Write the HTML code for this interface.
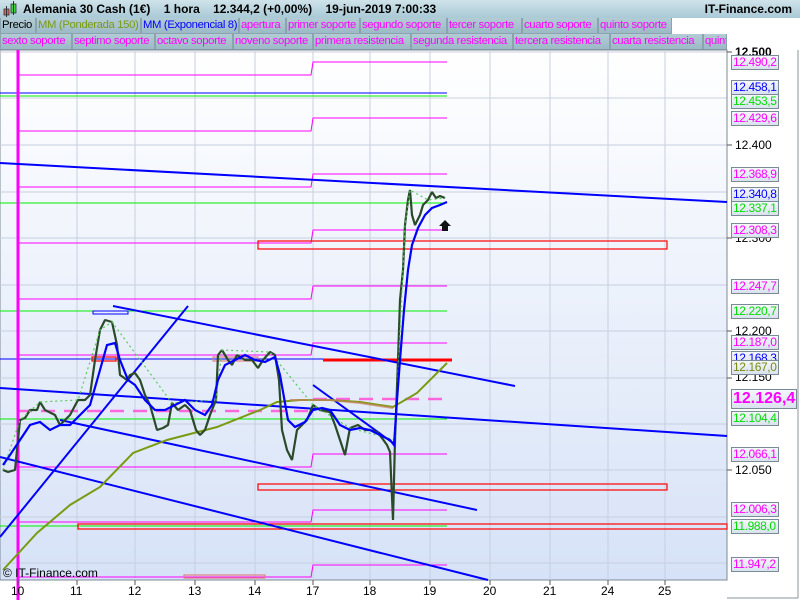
<!DOCTYPE html>
<html><head><meta charset="utf-8"><style>
*{margin:0;padding:0;box-sizing:border-box}
body{width:800px;height:600px;overflow:hidden;background:#fff;font-family:"Liberation Sans",sans-serif;position:relative}
#title{position:absolute;left:0;top:0;width:800px;height:18px;background:linear-gradient(#cfe3ea,#a9c9d6);font-weight:bold;font-size:12px;line-height:18px;color:#000;white-space:pre}
.row{position:absolute;left:0;height:16px;font-size:11.3px;line-height:15px;white-space:nowrap;letter-spacing:-0.35px}
.row span{position:absolute;top:0;height:16px;background:linear-gradient(#b3ccd6,#9bbac7);border:1px solid #8aa3ae;border-top:none;padding-left:1px;color:#f0f;overflow:hidden}
#rowbg{position:absolute;left:0;top:18px;width:727px;height:32px;background:#fff}
.lab{position:absolute;left:731px;width:48px;height:15px;border:1px solid #7b8b96;background:linear-gradient(#f4f7fb,#d9e2ee);font-size:12px;line-height:13px;padding-left:1px;white-space:nowrap;letter-spacing:-0.4px;overflow:hidden}
.ax{position:absolute;left:735px;font-size:12px;line-height:12px;color:#000}
.dt{position:absolute;top:584px;font-size:12px;color:#000}
</style></head><body>
<div id="title"><svg width="16" height="18" style="position:absolute;left:2px;top:0"><rect x="2" y="9" width="5" height="6" fill="#e06060" stroke="#333" stroke-width=".8"/><line x1="4.5" y1="6" x2="4.5" y2="17" stroke="#333"/><rect x="9" y="4" width="5" height="9" fill="#40d040" stroke="#333" stroke-width=".8"/><line x1="11.5" y1="1" x2="11.5" y2="15" stroke="#333"/></svg><span style="position:absolute;left:23px">Alemania 30 Cash (1€)    1 hora    12.344,2 (+0,00%)    19-jun-2019 7:00:33</span><span style="position:absolute;right:8px">IT-Finance.com</span></div>
<div id="rowbg"></div>
<div class="row" style="top:18px;width:800px">
<span style="left:0;width:36px;color:#000">Precio</span>
<span style="left:36px;width:105px;color:#7a9a10">MM (Ponderada 150)</span>
<span style="left:141px;width:98px;color:#0000ff">MM (Exponencial 8)</span>
<span style="left:239px;width:47px">apertura</span>
<span style="left:286px;width:74px">primer soporte</span>
<span style="left:360px;width:87px">segundo soporte</span>
<span style="left:447px;width:75px">tercer soporte</span>
<span style="left:522px;width:76px">cuarto soporte</span>
<span style="left:598px;width:74px">quinto soporte</span>
</div>
<div class="row" style="top:34px;width:800px">
<span style="left:0;width:72px">sexto soporte</span>
<span style="left:72px;width:83px">septimo soporte</span>
<span style="left:155px;width:78px">octavo soporte</span>
<span style="left:233px;width:80px">noveno soporte</span>
<span style="left:313px;width:98px">primera resistencia</span>
<span style="left:411px;width:102px">segunda resistencia</span>
<span style="left:513px;width:97px">tercera resistencia</span>
<span style="left:610px;width:93px">cuarta resistencia</span>
<span style="left:703px;width:24px">quint</span>
</div>
<svg width="800" height="600" style="position:absolute;left:0;top:0;overflow:hidden" font-family="Liberation Sans">
<defs><linearGradient id="bg" x1="0" y1="0" x2="0" y2="1"><stop offset="0" stop-color="#ffffff"/><stop offset="1" stop-color="#d6e2f7"/></linearGradient></defs>
<rect x="0" y="50" width="727" height="530" fill="url(#bg)" stroke="#7b8b96"/>
<g stroke="#c8cfdf" stroke-width="1">
<path d="M77 50V580M135 50V580M195 50V580M255 50V580M313 50V580M370 50V580M430 50V580M490 50V580M550 50V580M608 50V580M665 50V580"/>
<path d="M0 52H727M0 98H727M0 145H727M0 192H727M0 238H727M0 285H727M0 331H727M0 378H727M0 424H727M0 470H727M0 517H727M0 563H727"/>
</g>
<line x1="727" y1="50" x2="727" y2="580" stroke="#7b8b96"/>
<g fill="none" stroke="#ff00ff" stroke-width="1">
<path d="M18 75H311L313 62H447"/><path d="M18 131H311L313 118H447"/><path d="M18 187H311L313 174H447"/><path d="M18 243H311L313 230H447"/><path d="M18 299H311L313 286H447"/><path d="M18 355H311L313 343H447"/><path d="M18 467H311L313 454H447"/><path d="M18 522H311L313 510H447"/><path d="M18 577H311L313 565H447"/>
</g>
<g stroke="#ff66dd" stroke-width="2.5" stroke-dasharray="14 9"><path d="M18 411H311"/><path d="M313 399H447"/></g>
<g stroke="#00ee00" stroke-width="1"><path d="M0 96H447M0 203H447M0 311H447M0 419H447M0 526H447"/></g>
<g stroke="#0000ff" stroke-width="1"><path d="M0 93H447M0 359H447"/></g>
<g fill="none" stroke="#ff0000" stroke-width="1.2"><rect x="258" y="241" width="409" height="8"/><rect x="258" y="484" width="409" height="6"/><rect x="78" y="524" width="649" height="5"/><rect x="92" y="357" width="24" height="4"/><rect x="213" y="357" width="45" height="4" stroke="#e08080"/><rect x="184" y="575" width="81" height="3" stroke="#e08080"/></g>
<rect x="93" y="311" width="35" height="3" fill="none" stroke="#0000ff"/>
<line x1="323" y1="360" x2="452" y2="360" stroke="#ff0000" stroke-width="3"/>
<line x1="18" y1="50" x2="18" y2="600" stroke="#ff00ff" stroke-width="3"/>
<g stroke="#0000ff" stroke-width="2" fill="none">
<path d="M0 163L727 202"/><path d="M113 306L515 386"/><path d="M0 388L727 436"/><path d="M60 420L477 510"/><path d="M0 457L488 580"/><path d="M0 537L188 306"/><path d="M313 385L393 443"/>
</g>
<path d="M3 570L37 533L70 505L100 487L133 453L167 440L217 427L260 410L277 402L300 400L330 400L360 402L393 407L417 393L447 363" fill="none" stroke="#7a9a10" stroke-width="2"/>
<path d="M290 400L330 400L360 403L393 408" fill="none" stroke="#c88060" stroke-width="2" opacity=".7"/>
<polyline fill="none" stroke="#2a4a2a" stroke-width="2.2" stroke-linejoin="bevel" points="3,470 8,472 15,470 20,420 25,418 30,410 37,410 40,402 45,410 55,415 60,425 70,415 78,400 85,400 90,395 95,360 100,330 105,320 112,322 117,345 120,375 127,380 130,375 135,373 140,380 145,395 150,405 157,430 163,428 168,425 172,403 178,410 185,405 190,410 196,430 200,435 205,430 210,415 216,400 218,355 222,350 228,360 232,365 237,355 245,360 252,360 258,368 263,360 270,352 275,355 279,380 282,430 287,450 292,460 297,430 302,425 307,420 313,405 320,410 330,412 335,425 340,440 345,455 350,428 358,425 365,430 370,430 377,432 382,438 387,445 390,452 393,520 395,440 398,360 400,300 403,270 405,225 408,200 410,190 412,215 415,225 420,215 423,205 428,200 432,192 436,198 440,196 445,198"/>
<polyline fill="none" stroke="#55cc55" stroke-width="1.2" stroke-dasharray="2 3" points="3,470 20,420 40,402 78,400 100,330 112,322 172,403 216,400 222,350 270,352 313,405 350,428 395,440 405,225 410,190 428,200 445,198"/>
<polyline fill="none" stroke="#0000ff" stroke-width="2.2" points="3,465 10,455 20,440 30,425 40,422 50,430 60,425 70,425 80,415 90,405 100,370 107,345 115,343 120,360 128,380 135,385 145,400 155,410 165,410 175,405 185,400 195,410 205,415 212,405 218,380 225,365 235,360 245,355 255,360 265,362 275,357 280,375 288,420 295,427 305,422 313,410 322,408 330,410 340,425 350,430 360,428 370,430 380,435 390,440 394,445 397,400 400,360 404,310 408,270 412,245 418,228 425,215 432,208 440,205 447,202"/>
<path d="M445 220L451 226H448V231H442V226H439Z" fill="#111"/>
<text x="3" y="577" font-size="12" fill="#000">© IT-Finance.com</text>
<line x1="798" y1="50" x2="798" y2="598" stroke="#8a949c"/>
<line x1="727" y1="598" x2="798" y2="598" stroke="#8a949c"/>
<g stroke="#555"><path d="M727 145h5M727 331h5M727 378h5M727 470h5M727 52h5M727 238h5"/></g>
<g stroke="#555"><path d="M18 580v5M77 580v5M135 580v5M195 580v5M255 580v5M313 580v5M370 580v5M430 580v5M490 580v5M550 580v5M608 580v5M665 580v5"/></g>
</svg>
<div class="ax" style="top:46px;font-weight:bold">12.500</div>
<div class="ax" style="top:139px">12.400</div>
<div class="ax" style="top:232px">12.300</div>
<div class="ax" style="top:325px">12.200</div>
<div class="ax" style="top:371px">12.150</div>
<div class="ax" style="top:464px">12.050</div>
<div class="lab" style="top:55px;color:#f0f">12.490,2</div>
<div class="lab" style="top:80px;color:#00f">12.458,1</div>
<div class="lab" style="top:94px;color:#0d0">12.453,5</div>
<div class="lab" style="top:111px;color:#f0f">12.429,6</div>
<div class="lab" style="top:167px;color:#f0f">12.368,9</div>
<div class="lab" style="top:187px;color:#00f">12.340,8</div>
<div class="lab" style="top:201px;color:#0d0">12.337,1</div>
<div class="lab" style="top:223px;color:#f0f">12.308,3</div>
<div class="lab" style="top:279px;color:#f0f">12.247,7</div>
<div class="lab" style="top:304px;color:#0d0">12.220,7</div>
<div class="lab" style="top:335px;color:#f0f">12.187,0</div>
<div class="lab" style="top:351px;color:#00f">12.168,3</div>
<div class="lab" style="top:360px;color:#7a8a10">12.167,0</div>
<div class="lab" style="top:389px;width:66px;height:20px;font-size:16px;line-height:18px;font-weight:bold;color:#f0f;letter-spacing:0">12.126,4</div>
<div class="lab" style="top:411px;color:#0d0">12.104,4</div>
<div class="lab" style="top:447px;color:#f0f">12.066,1</div>
<div class="lab" style="top:502px;color:#f0f">12.006,3</div>
<div class="lab" style="top:519px;color:#0d0">11.988,0</div>
<div class="lab" style="top:557px;color:#f0f">11.947,2</div>
<div class="dt" style="left:11px">10</div><div class="dt" style="left:70px">11</div><div class="dt" style="left:128px">12</div><div class="dt" style="left:188px">13</div><div class="dt" style="left:248px">14</div><div class="dt" style="left:306px">17</div><div class="dt" style="left:363px">18</div><div class="dt" style="left:423px">19</div><div class="dt" style="left:483px">20</div><div class="dt" style="left:543px">21</div><div class="dt" style="left:601px">24</div><div class="dt" style="left:658px">25</div>
</body></html>
